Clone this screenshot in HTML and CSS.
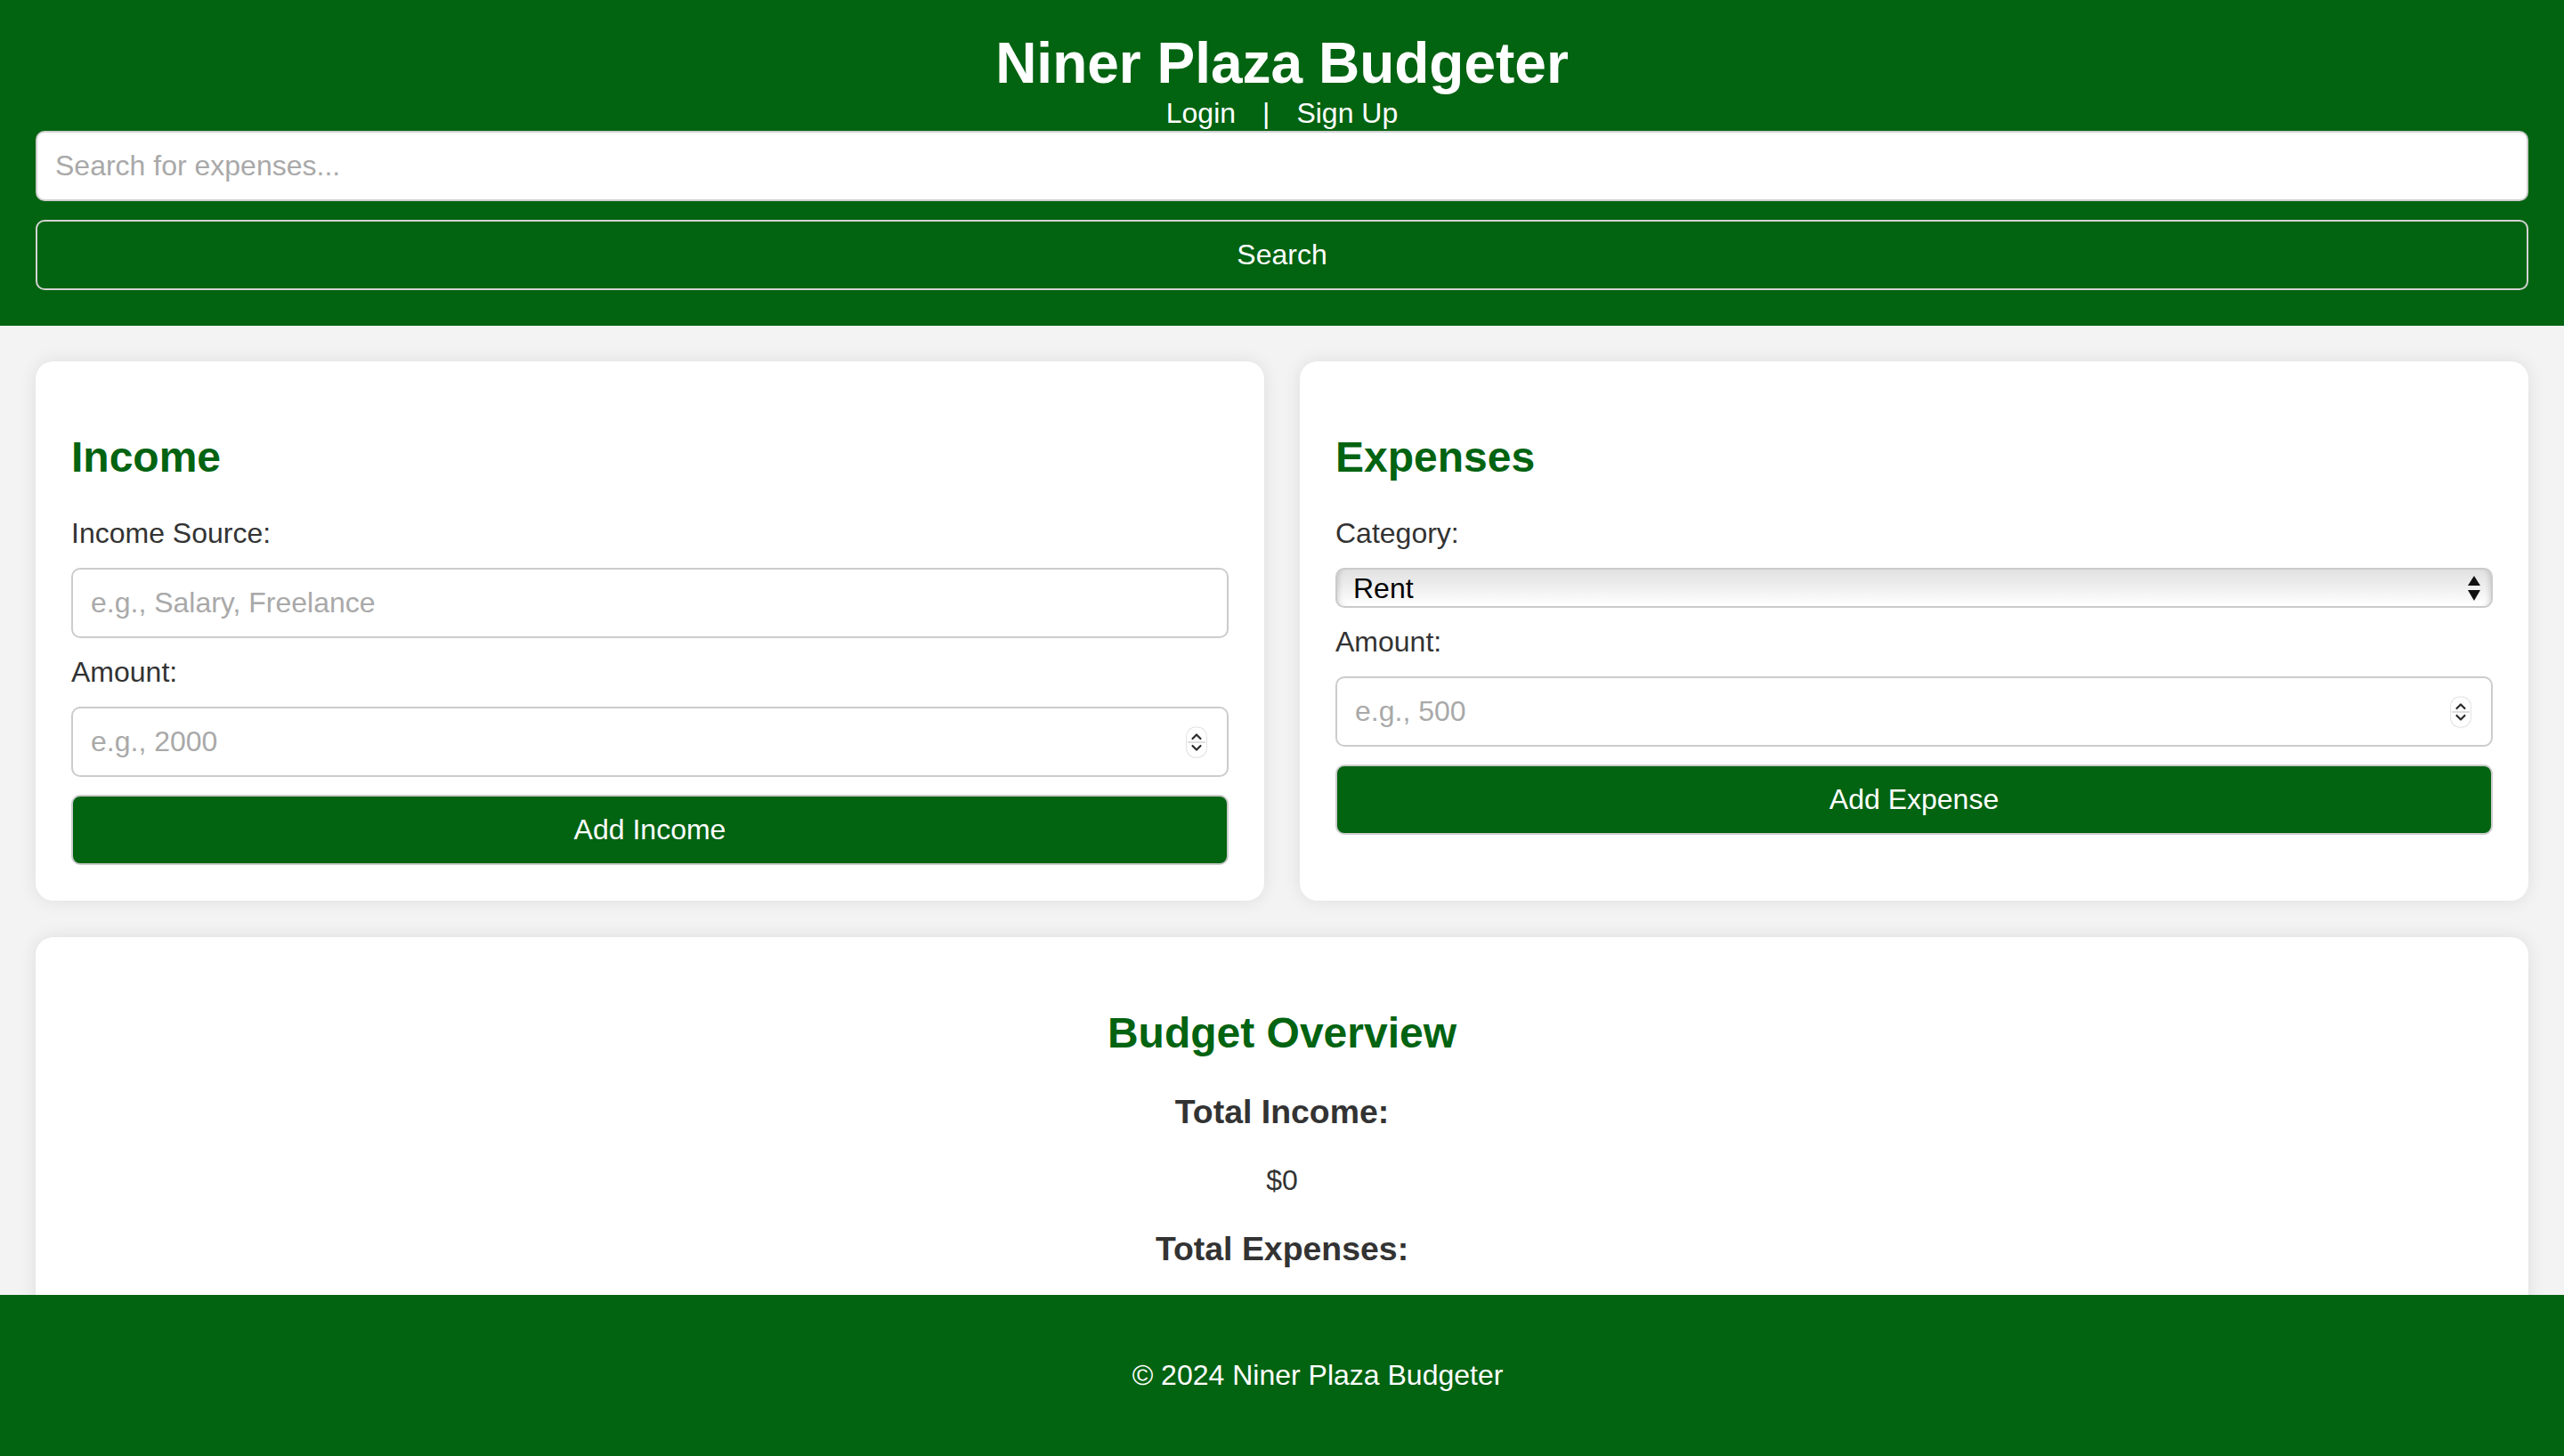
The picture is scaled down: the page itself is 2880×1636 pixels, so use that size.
FILE: index.html
```html
<!DOCTYPE html>
<html lang="en">
<head>
<meta charset="utf-8">
<title>Niner Plaza Budgeter</title>
<link rel="stylesheet" href="styles.css">
</head>
<body>
<header class="site-header">
  <h1 class="site-title">Niner Plaza Budgeter</h1>
  <nav class="auth-nav"><a class="auth-link" href="#">Login</a>|<a class="auth-link" href="#">Sign Up</a></nav>
  <input class="search-input" type="text" placeholder="Search for expenses...">
  <button class="search-button" type="button">Search</button>
</header>

<main class="content">
  <div class="forms-grid">
    <section class="card">
      <h2 class="card-title">Income</h2>
      <label class="field-label" for="income-source">Income Source:</label>
      <input class="field-input" id="income-source" type="text" placeholder="e.g., Salary, Freelance">
      <label class="field-label" for="income-amount">Amount:</label>
      <div class="number-field">
        <input class="field-input number-input" id="income-amount" type="text" placeholder="e.g., 2000">
        <span class="spinner"><svg viewBox="0 0 22 33" width="22" height="33"><path d="M6.5 12.5 L11 8 L15.5 12.5" fill="none" stroke="#2b2b2b" stroke-width="2.2" stroke-linecap="round" stroke-linejoin="round"/><line x1="1" y1="16.5" x2="21" y2="16.5" stroke="#d4d4d4" stroke-width="1.5"/><path d="M6.5 20.5 L11 25 L15.5 20.5" fill="none" stroke="#2b2b2b" stroke-width="2.2" stroke-linecap="round" stroke-linejoin="round"/></svg></span>
      </div>
      <button class="primary-button" type="button">Add Income</button>
    </section>

    <section class="card">
      <h2 class="card-title">Expenses</h2>
      <label class="field-label" for="expense-category">Category:</label>
      <div class="select-field">
        <select class="field-select" id="expense-category">
          <option>Rent</option>
          <option>Food</option>
          <option>Utilities</option>
          <option>Transportation</option>
          <option>Entertainment</option>
        </select>
        <span class="select-arrows"><svg viewBox="0 0 14 28" width="14" height="28"><polygon points="7,0 14,11 0,11" fill="#111"/><polygon points="0,16 14,16 7,28" fill="#111"/></svg></span>
      </div>
      <label class="field-label" for="expense-amount">Amount:</label>
      <div class="number-field">
        <input class="field-input number-input" id="expense-amount" type="text" placeholder="e.g., 500">
        <span class="spinner"><svg viewBox="0 0 22 33" width="22" height="33"><path d="M6.5 12.5 L11 8 L15.5 12.5" fill="none" stroke="#2b2b2b" stroke-width="2.2" stroke-linecap="round" stroke-linejoin="round"/><line x1="1" y1="16.5" x2="21" y2="16.5" stroke="#d4d4d4" stroke-width="1.5"/><path d="M6.5 20.5 L11 25 L15.5 20.5" fill="none" stroke="#2b2b2b" stroke-width="2.2" stroke-linecap="round" stroke-linejoin="round"/></svg></span>
      </div>
      <button class="primary-button" type="button">Add Expense</button>
    </section>
  </div>

  <section class="card overview">
    <h2 class="card-title">Budget Overview</h2>
    <h3 class="overview-label">Total Income:</h3>
    <p class="overview-value">$0</p>
    <h3 class="overview-label">Total Expenses:</h3>
    <p class="overview-value">$0</p>
  </section>
</main>

<footer class="site-footer">
  <p class="footer-text">© 2024 Niner Plaza Budgeter</p>
</footer>
</body>
</html>
```

FILE: styles.css
```css
html, body {
  margin: 0;
  padding: 0;
}

body {
  background: #f3f3f3;
  font-family: "Liberation Sans", Arial, Helvetica, sans-serif;
  color: #333;
}

.site-header {
  background: #026311;
  padding: 35px 40px 40px;
  text-align: center;
  color: #fff;
}

.site-title {
  margin: 0;
  font-size: 64px;
  line-height: 73px;
  font-weight: bold;
  color: #fff;
}

.auth-nav {
  font-size: 32px;
  line-height: 38px;
  color: #fff;
  margin-bottom: 1px;
}

.auth-link {
  color: #fff;
  text-decoration: none;
  margin: 0 30px;
}

.search-input {
  display: block;
  box-sizing: border-box;
  width: 100%;
  height: 79px;
  margin: 0 0 21px;
  padding: 0 20px;
  font-family: inherit;
  font-size: 32px;
  color: #333;
  background: #fff;
  border: 2px solid #cfcfcf;
  border-radius: 10px;
  outline: none;
}

.search-button {
  display: block;
  box-sizing: border-box;
  width: 100%;
  height: 79px;
  margin: 0;
  padding: 0;
  font-family: inherit;
  font-size: 32px;
  color: #fff;
  background: #026311;
  border: 2px solid #d2d2d2;
  border-radius: 10px;
}

::placeholder {
  color: #a9a9a9;
  opacity: 1;
}

.content {
  padding: 40px 40px 0;
  display: flex;
  flex-direction: column;
  gap: 41px;
}

.forms-grid {
  display: grid;
  grid-template-columns: 1fr 1fr;
  gap: 40px;
}

.card {
  background: #fff;
  border-radius: 20px;
  padding: 40px;
  box-shadow: 0 0 20px rgba(0, 0, 0, 0.09);
}

.card-title {
  margin: 40px 0;
  font-size: 48px;
  line-height: 55px;
  font-weight: bold;
  color: #026311;
}

.field-label {
  display: block;
  font-size: 32px;
  line-height: 37px;
  color: #333;
}

.field-input {
  display: block;
  box-sizing: border-box;
  width: 100%;
  height: 79px;
  margin: 20px 0;
  padding: 0 20px;
  font-family: inherit;
  font-size: 32px;
  color: #333;
  background: #fff;
  border: 2px solid #cccccc;
  border-radius: 10px;
  outline: none;
}

.number-field {
  position: relative;
}

.spinner {
  position: absolute;
  right: 25px;
  top: 50%;
  transform: translateY(-50%);
  width: 22px;
  height: 33px;
  border-radius: 10px;
  background: #fff;
  box-shadow: 0 0 0 1px #e4e4e4, 0 1px 2px rgba(0, 0, 0, 0.08);
  display: flex;
}

.select-field {
  position: relative;
  margin: 20px 0;
}

.field-select {
  display: block;
  box-sizing: border-box;
  width: 100%;
  height: 45px;
  margin: 0;
  padding: 0 60px 0 18px;
  font-family: inherit;
  font-size: 32px;
  color: #000;
  -webkit-appearance: none;
  appearance: none;
  border: 2px solid #cbcbcb;
  border-radius: 10px;
  background: linear-gradient(to bottom, #e2e2e2 0%, #ececec 40%, #fbfbfb 85%, #ffffff 100%);
  box-shadow: inset 6px 0 6px -5px rgba(0, 0, 0, 0.18), inset -6px 0 6px -5px rgba(0, 0, 0, 0.18);
  outline: none;
}

.select-arrows {
  position: absolute;
  right: 14px;
  top: 9px;
  width: 14px;
  height: 28px;
  display: flex;
  pointer-events: none;
}

.primary-button {
  display: block;
  box-sizing: border-box;
  width: 100%;
  height: 79px;
  margin: 0;
  padding: 0;
  font-family: inherit;
  font-size: 32px;
  color: #fff;
  background: #026311;
  border: 2px solid #cccccc;
  border-radius: 10px;
}

.overview {
  text-align: center;
  padding-bottom: 40px;
}

.overview-label {
  margin: 37px 0;
  font-size: 37.44px;
  line-height: 43px;
  font-weight: bold;
  color: #333;
}

.overview-value {
  margin: 32px 0;
  font-size: 32px;
  line-height: 37px;
  color: #333;
}

.site-footer {
  position: fixed;
  left: 0;
  bottom: 0;
  width: 100%;
  padding: 40px;
  background: #026311;
  color: #fff;
  text-align: center;
}

.footer-text {
  margin: 32px 0;
  font-size: 32px;
  line-height: 37px;
}
```
